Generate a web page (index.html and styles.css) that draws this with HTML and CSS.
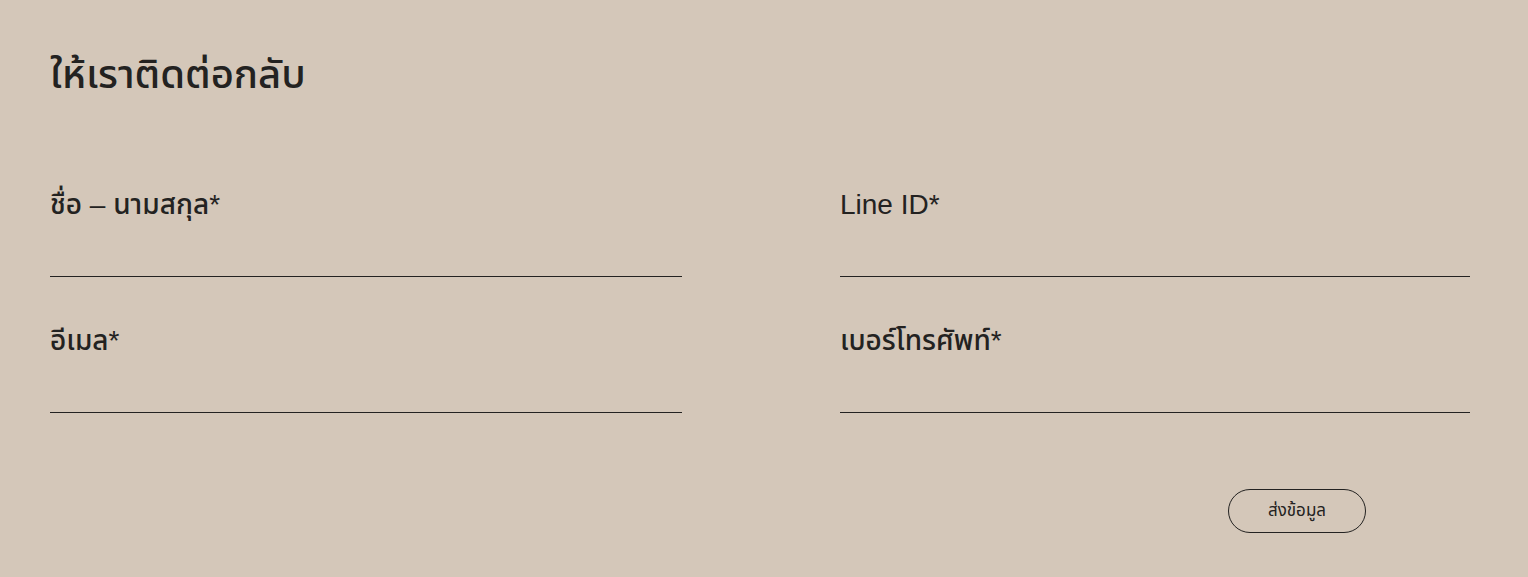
FILE: index.html
```html
<!DOCTYPE html>
<html lang="th">
<head>
    <meta charset="UTF-8">
    <meta name="viewport" content="width=device-width, initial-scale=1.0">
    <title>ให้เราติดต่อกลับ</title>
    <link rel="stylesheet" href="styles.css">
</head>
<body>
    <section class="contact">
        <h1>ให้เราติดต่อกลับ</h1>
        <form id="contactForm" class="contact-form">
            <div class="field">
                <label for="name">ชื่อ – นามสกุล*</label>
                <input type="text" id="name" required>
            </div>
            <div class="field">
                <label for="line">Line ID*</label>
                <input type="text" id="line" required>
            </div>
            <div class="field">
                <label for="email">อีเมล*</label>
                <input type="email" id="email" required>
            </div>
            <div class="field">
                <label for="phone">เบอร์โทรศัพท์*</label>
                <input type="tel" id="phone" required>
            </div>
            <div class="actions">
                <button type="submit" class="send">ส่งข้อมูล</button>
            </div>
        </form>
    </section>
</body>
</html>
```

FILE: styles.css
```css
body {
    margin: 0;
    background-color: #d4c7b9;
    font-family: "Liberation Sans", "Noto Sans Thai", "Noto Sans Thai UI", sans-serif;
    color: #232221;
}

.contact {
    padding: 44px 58px 0 50px;
}

h1 {
    margin: 0;
    font-size: 40px;
    font-weight: 500;
    line-height: 60px;
}

.contact-form {
    display: grid;
    grid-template-columns: 632px 630px;
    column-gap: 158px;
    margin-top: 83px;
}

.field {
    display: flex;
    flex-direction: column;
    height: 136px;
}

label {
    font-size: 28px;
    font-weight: 500;
    line-height: 36px;
}

input {
    height: 53px;
    padding: 0;
    border: none;
    border-bottom: 1px solid #232221;
    background: transparent;
    font-family: inherit;
    font-size: 20px;
    outline: none;
}

.actions {
    grid-column: 1 / 3;
    display: flex;
    justify-content: flex-end;
    padding-right: 104px;
    margin-top: 30px;
}

.send {
    width: 138px;
    height: 44px;
    background: transparent;
    border: 1px solid #232221;
    border-radius: 22px;
    font-family: inherit;
    font-size: 17px;
    font-weight: 400;
    color: #232221;
    cursor: pointer;
}
```
